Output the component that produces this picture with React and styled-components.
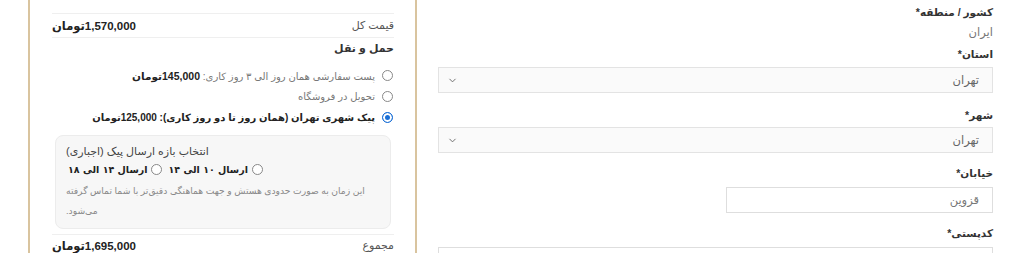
import styled, { createGlobalStyle } from "styled-components";
import { ChevronDown } from "lucide-react";

const GlobalStyle = createGlobalStyle`
  body {
    margin: 0;
    background: #fff;
    font-family: "Liberation Sans", "DejaVu Sans", sans-serif;
    direction: rtl;
  }
`;

const Radio = ({ checked }) => <RadioDot $checked={checked} />;

const Checkout = () => {
  return (
    <Page>
      <GlobalStyle />
      <FormCol>
        <Label $mt={3}>کشور / منطقه*</Label>
        <StaticValue>ایران</StaticValue>
        <Label $mt={3}>استان*</Label>
        <Select $mt={4}>
          <span>تهران</span>
          <ChevronDown size={11} strokeWidth={2} color="#666" />
        </Select>
        <Label $mt={13}>شهر*</Label>
        <Select $mt={3}>
          <span>تهران</span>
          <ChevronDown size={11} strokeWidth={2} color="#666" />
        </Select>
        <Label $mt={11}>خیابان*</Label>
        <Input $half>قزوین</Input>
        <Label $mt={11}>کدپستی*</Label>
        <Input />
      </FormCol>

      <Summary>
        <Row>
          <RowLabel>قیمت کل</RowLabel>
          <Amount>1,570,000تومان</Amount>
        </Row>
        <Heading>حمل و نقل</Heading>
        <RadioList>
          <Option>
            <Radio />
            <OptionText>
              پست سفارشی همان روز الی ۳ روز کاری: <b>145,000تومان</b>
            </OptionText>
          </Option>
          <Option>
            <Radio />
            <OptionText>تحویل در فروشگاه</OptionText>
          </Option>
          <Option>
            <Radio checked />
            <OptionText $strong>
              پیک شهری تهران (همان روز تا دو روز کاری): 125,000تومان
            </OptionText>
          </Option>
        </RadioList>

        <SlotBox>
          <SlotTitle>انتخاب بازه ارسال پیک (اجباری)</SlotTitle>
          <SlotRow>
            <Radio />
            <SlotText>ارسال ۱۰ الی ۱۴</SlotText>
            <Radio />
            <SlotText>ارسال ۱۴ الی ۱۸</SlotText>
          </SlotRow>
          <SlotNote>
            این زمان به صورت حدودی هستش و جهت هماهنگی دقیق‌تر با شما تماس گرفته
            می‌شود.
          </SlotNote>
        </SlotBox>

        <TotalRow>
          <RowLabel>مجموع</RowLabel>
          <Amount>1,695,000تومان</Amount>
        </TotalRow>
      </Summary>
    </Page>
  );
};

const Page = styled.div`
  display: flex;
  direction: rtl;
  gap: 21px;
  height: 253px;
  overflow: hidden;
  padding: 0 31px 0 28px;
  box-sizing: border-box;
`;

const FormCol = styled.div`
  flex: 1;
  display: block;
`;

const Label = styled.div`
  margin-top: ${(p) => p.$mt || 0}px;
  line-height: 18px;
  font-size: 10.5px;
  font-weight: bold;
  color: #333;
`;

const StaticValue = styled.div`
  margin-top: 1px;
  line-height: 20px;
  font-size: 11.5px;
  color: #777;
`;

const Select = styled.div`
  margin-top: ${(p) => p.$mt || 0}px;
  height: 26px;
  box-sizing: border-box;
  display: flex;
  align-items: center;
  justify-content: space-between;
  padding: 0 13px 0 8px;
  background: #fafafa;
  border: 1px solid #e3e3e3;
  font-size: 11.5px;
  color: #666;
`;

const Input = styled.div`
  margin-top: 5px;
  height: 26px;
  box-sizing: border-box;
  width: ${(p) => (p.$half ? "267px" : "auto")};
  display: flex;
  align-items: center;
  padding: 0 13px;
  background: #fff;
  border: 1px solid #dedede;
  font-size: 11.5px;
  color: #777;
`;

const Summary = styled.div`
  flex: none;
  width: 389px;
  box-sizing: border-box;
  border-left: 2px solid #d9c49f;
  border-right: 2px solid #d9c49f;
  padding: 13px 21px 0 22px;
`;

const Row = styled.div`
  display: flex;
  justify-content: space-between;
  align-items: center;
  height: 23px;
  border-top: 1px solid #efefef;
  border-bottom: 1px solid #efefef;
`;

const TotalRow = styled(Row)`
  margin-top: 5px;
  border-bottom: none;
  height: 21px;
`;

const RowLabel = styled.span`
  font-size: 11px;
  color: #555;
`;

const Amount = styled.span`
  font-size: 11.5px;
  font-weight: bold;
  color: #222;
`;

const Heading = styled.div`
  margin-top: 1px;
  line-height: 18px;
  font-size: 11px;
  font-weight: bold;
  color: #333;
`;

const RadioList = styled.div`
  margin-top: 8px;
  display: flex;
  flex-direction: column;
`;

const Option = styled.label`
  display: flex;
  align-items: center;
  gap: 7px;
  height: 21px;
  padding-right: 1px;
`;

const RadioDot = styled.span`
  flex: none;
  width: 9px;
  height: 9px;
  border-radius: 50%;
  border: 1px solid ${(p) => (p.$checked ? "#1a6fd6" : "#888")};
  background: ${(p) => (p.$checked ? "#1a6fd6" : "#fff")};
  box-shadow: ${(p) => (p.$checked ? "inset 0 0 0 2px #fff" : "none")};
`;

const OptionText = styled.span`
  font-size: 10px;
  color: ${(p) => (p.$strong ? "#222" : "#777")};
  font-weight: ${(p) => (p.$strong ? "bold" : "normal")};

  b {
    color: #222;
    font-size: 10.5px;
  }
`;

const SlotBox = styled.div`
  margin: 7px 3px 0;
  height: 94px;
  box-sizing: border-box;
  padding: 6px 10px 0;
  background: #f7f7f7;
  border: 1px solid #ececec;
  border-radius: 8px;
  text-align: left;
`;

const SlotTitle = styled.div`
  line-height: 18px;
  font-size: 11px;
  color: #444;
`;

const SlotRow = styled.div`
  display: flex;
  justify-content: flex-end;
  align-items: center;
  gap: 4px;
  height: 18px;
`;

const SlotText = styled.span`
  font-family: "DejaVu Sans", sans-serif;
  font-size: 9.5px;
  font-weight: bold;
  color: #222;
  margin-left: 2px;
`;

const SlotNote = styled.div`
  margin-top: 3px;
  line-height: 20px;
  font-size: 9.2px;
  color: #888;
`;

export default function App() {
  return <Checkout />;
}
